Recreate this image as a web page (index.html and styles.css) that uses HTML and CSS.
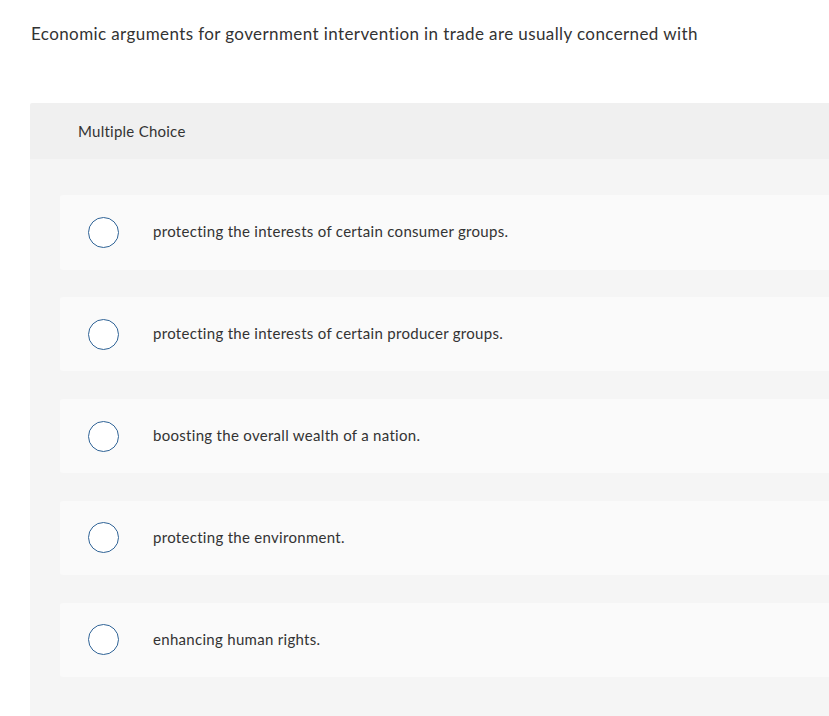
FILE: index.html
```html
<!DOCTYPE html>
<html lang="en">
<head>
<meta charset="utf-8">
<title>Multiple Choice</title>
<link rel="stylesheet" href="styles.css">
</head>
<body>
<div class="page">
  <p class="question">Economic arguments for government intervention in trade are usually concerned with</p>
  <section class="panel">
    <header class="panel-head">Multiple Choice</header>
    <div class="panel-body">
      <label class="option"><span class="radio"></span><span class="opt-text">protecting the interests of certain consumer groups.</span></label>
      <label class="option"><span class="radio"></span><span class="opt-text">protecting the interests of certain producer groups.</span></label>
      <label class="option"><span class="radio"></span><span class="opt-text">boosting the overall wealth of a nation.</span></label>
      <label class="option"><span class="radio"></span><span class="opt-text">protecting the environment.</span></label>
      <label class="option"><span class="radio"></span><span class="opt-text">enhancing human rights.</span></label>
    </div>
  </section>
</div>
</body>
</html>
```
FILE: styles.css
```css
html, body {
  margin: 0;
  padding: 0;
  background: #ffffff;
  overflow: hidden;
  height: 100%;
}
body {
  font-family: "Lato", "Liberation Sans", sans-serif;
  color: #333333;
}
.page {
  padding: 0 0 0 30px;
}
.question {
  margin: 0;
  padding: 23px 0 0 1px;
  font-size: 17px;
  line-height: 22px;
  letter-spacing: 0.4px;
  height: 80px;
  box-sizing: border-box;
}
.panel {
  margin-top: 23px;
  margin-right: -40px;
}
.panel-head {
  background: #f0f0f0;
  height: 56px;
  display: flex;
  align-items: center;
  padding-left: 48px;
  font-size: 15px;
  letter-spacing: 0.25px;
  border-radius: 2px 2px 0 0;
}
.panel-body {
  background: #f5f5f5;
  padding: 36px 0 40px 30px;
  display: flex;
  flex-direction: column;
  gap: 27.4px;
}
.option {
  background: #fafafa;
  border-radius: 3px;
  height: 74.5px;
  display: flex;
  align-items: center;
  padding-left: 28px;
  font-size: 15px;
  letter-spacing: 0.3px;
}
.radio {
  width: 31px;
  height: 31px;
  box-sizing: border-box;
  border: 1.5px solid #2f6396;
  border-radius: 50%;
  background: #ffffff;
  flex: none;
}
.opt-text {
  margin-left: 34px;
  position: relative;
  top: -1px;
}
```
